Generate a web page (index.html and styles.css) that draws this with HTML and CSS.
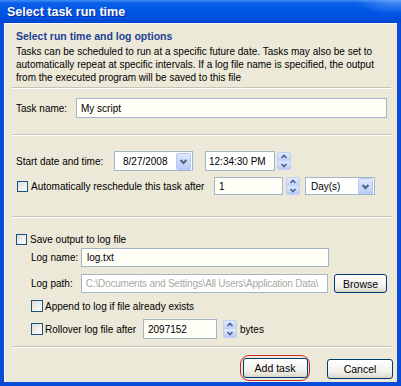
FILE: index.html
```html
<!DOCTYPE html>
<html lang="en">
<head>
  <meta charset="UTF-8" />
  <title>Select task run time</title>
  <link rel="stylesheet" href="styles.css">
</head>
<body>
  <div class="window">
    <div class="titlebar">Select task run time</div>

    <div class="client">
      <div class="heading">Select run time and log options</div>
      <p class="intro">
        Tasks can be scheduled to run at a specific future date. Tasks may also be set to<br>
        automatically repeat at specific intervals. If a log file name is specified, the output<br>
        from the executed program will be saved to this file
      </p>

      <div class="sep sep-top"></div>

      <div class="row row-name">
        <span class="label label-name">Task name:</span>
        <span class="field field-name">My script</span>
      </div>

      <div class="sep sep-mid"></div>

      <div class="row row-start">
        <span class="label label-start">Start date and time:</span>
        <span class="field combo combo-date">
          <span class="combo-text">8/27/2008</span>
          <span class="drop">
            <svg width="13" height="15" viewBox="0 0 13 15"><path d="M3.5 6 L6.5 9 L9.5 6" fill="none" stroke="#4d6185" stroke-width="2"/></svg>
          </span>
        </span>
        <span class="field field-time">12:34:30 PM</span>
        <span class="spin spin-time">
          <svg width="14" height="18" viewBox="0 0 14 18">
            <path d="M4.5 6 L7 3.5 L9.5 6" fill="none" stroke="#4d6185" stroke-width="1.6"/>
            <path d="M4.5 12 L7 14.5 L9.5 12" fill="none" stroke="#4d6185" stroke-width="1.6"/>
          </svg>
        </span>
      </div>

      <div class="row row-auto">
        <span class="check"></span>
        <span class="label label-auto">Automatically reschedule this task after</span>
        <span class="field field-count">1</span>
        <span class="spin spin-count">
          <svg width="14" height="18" viewBox="0 0 14 18">
            <path d="M4.5 6 L7 3.5 L9.5 6" fill="none" stroke="#4d6185" stroke-width="1.6"/>
            <path d="M4.5 12 L7 14.5 L9.5 12" fill="none" stroke="#4d6185" stroke-width="1.6"/>
          </svg>
        </span>
        <span class="field combo combo-unit">
          <span class="combo-text">Day(s)</span>
          <span class="drop">
            <svg width="13" height="15" viewBox="0 0 13 15"><path d="M3.5 6 L6.5 9 L9.5 6" fill="none" stroke="#4d6185" stroke-width="2"/></svg>
          </span>
        </span>
      </div>

      <div class="sep sep-log"></div>

      <div class="row row-save">
        <span class="check"></span>
        <span class="label label-save">Save output to log file</span>
      </div>

      <div class="row row-logname indent">
        <span class="label label-log">Log name:</span>
        <span class="field field-log">log.txt</span>
      </div>

      <div class="row row-logpath indent">
        <span class="label label-log">Log path:</span>
        <span class="field field-log disabled">C:\Documents and Settings\All Users\Application Data\</span>
        <span class="btn btn-browse">Browse</span>
      </div>

      <div class="row row-append indent">
        <span class="check check-big"></span>
        <span class="label label-check">Append to log if file already exists</span>
      </div>

      <div class="row row-roll indent">
        <span class="check check-big"></span>
        <span class="label label-roll">Rollover log file after</span>
        <span class="field field-size">2097152</span>
        <span class="spin spin-size">
          <svg width="14" height="18" viewBox="0 0 14 18">
            <path d="M4.5 6 L7 3.5 L9.5 6" fill="none" stroke="#4d6185" stroke-width="1.6"/>
            <path d="M4.5 12 L7 14.5 L9.5 12" fill="none" stroke="#4d6185" stroke-width="1.6"/>
          </svg>
        </span>
        <span class="label label-bytes">bytes</span>
      </div>

      <div class="sep sep-bottom"></div>

      <div class="row row-buttons">
        <span class="ring"><span class="btn btn-add">Add task</span></span>
        <span class="btn btn-cancel">Cancel</span>
      </div>
    </div>
  </div>
</body>
</html>
```

FILE: styles.css
```css
html, body {
  margin: 0;
  padding: 0;
  background: #ece9d8;
}

.window {
  width: 401px;
  height: 386px;
  display: flex;
  flex-direction: column;
  font-family: "Liberation Sans", Arial, sans-serif;
  font-size: 10px;
  color: #000;
  overflow: hidden;
}

/* blue XP caption */
.titlebar {
  height: 23px;
  line-height: 25px;
  padding-left: 7px;
  color: #fff;
  font-size: 12.5px;
  font-weight: bold;
  text-shadow: 1px 1px 0 #0a2a9a;
  background:
    radial-gradient(ellipse 40px 14px at 395px 0, rgba(120, 180, 255, 0.6), rgba(120, 180, 255, 0)),
    linear-gradient(to bottom, #3d8ff5 0, #0b5ee8 3px, #0058e6 45%, #004fdf 80%, #0043cc 100%);
}

.client {
  flex: 1;
  background: #ece9d8;
  border: 4px solid #0b4bd9;
  border-top: 0;
  padding: 7px 10px 0 12px;
  box-shadow: inset 1px 1px 0 #fbfaf3;
}

.heading {
  height: 12px;
  line-height: 12px;
  font-weight: bold;
  font-size: 10.5px;
  color: #1d3f94;
}

.intro {
  margin: 3px 0 0;
  line-height: 13px;
  white-space: nowrap;
}

.sep {
  height: 0;
  border-top: 1px solid #c7c4b4;
  border-bottom: 1px solid #fff;
  margin-left: -4px;
  margin-right: -4px;
}

.sep-top { margin-top: 3px; }
.sep-mid { margin-top: 16px; }
.sep-log { margin-top: 21px; }
.sep-bottom { margin-top: 7px; }

.row {
  display: flex;
  align-items: center;
  white-space: nowrap;
}

.indent { padding-left: 15px; }

.row-name { margin-top: 9px; height: 20px; }
.row-start { margin-top: 15px; height: 20px; }
.row-auto { margin-top: 6px; height: 18px; }
.row-save { margin-top: 14px; height: 15px; }
.row-logname { margin-top: 1px; height: 19px; }
.row-logpath { margin-top: 7px; height: 19px; }
.row-append { margin-top: 6px; height: 14px; }
.row-roll { margin-top: 6px; height: 20px; }
.row-buttons { margin-top: 7px; height: 26px; justify-content: flex-end; margin-right: -6px; }

.label-name { width: 60px; }
.label-start { width: 98px; }
.label-auto { width: 183px; margin-left: 3px; }
.label-save { margin-left: 3px; }
.label-log { width: 50px; }
.label-check { margin-left: 2px; }
.label-roll { width: 98px; margin-left: 2px; }
.label-bytes { margin-left: 3px; }

.field {
  box-sizing: border-box;
  height: 100%;
  display: flex;
  align-items: center;
  padding-left: 4px;
  background: #fffef7;
  border: 1px solid #a5b5c9;
  overflow: hidden;
}

.field-name { width: 311px; }
.field-time { width: 70px; margin-left: 12px; padding-left: 3px; background: #fff; }
.field-count { width: 69px; height: 18px; }
.field-log { width: 248px; padding-left: 5px; }
.field-size { width: 74px; }

.disabled {
  color: #a9a8a2;
  background: #fff;
  padding-left: 4px;
  letter-spacing: -0.2px;
}

.combo {
  justify-content: space-between;
  padding-right: 1px;
  background: #fff;
}

.combo-date { width: 79px; padding-left: 8px; }
.combo-unit { width: 70px; height: 18px; margin-left: 5px; padding-left: 5px; }

.drop {
  width: 13px;
  height: 15px;
  border: 1px solid #b6c9f5;
  border-radius: 2px;
  background: linear-gradient(to bottom, #dfe8fd, #b8cbf6);
  display: flex;
}

.spin {
  width: 14px;
  height: 18px;
  display: flex;
  border-radius: 2px;
  background:
    linear-gradient(to bottom, #e3ebfd, #bfd0f7 48%, #ece9d8 48%, #ece9d8 52%, #dfe8fd 52%, #b8cbf6);
  border: 1px solid #c0d0f3;
  box-sizing: border-box;
}

.spin svg { margin: -1px; }

.spin-time { margin-left: 2px; }
.spin-count { margin-left: 3px; }
.spin-size { margin-left: 6px; }

.check {
  box-sizing: border-box;
  width: 11px;
  height: 11px;
  border: 1px solid #1c5180;
  background: linear-gradient(135deg, #dcdcd5, #fff);
}

.row-auto .check { margin-left: 1px; }
.check-big { width: 12px; height: 12px; }

.btn {
  box-sizing: border-box;
  display: flex;
  align-items: center;
  justify-content: center;
  height: 20px;
  border: 1px solid #003c74;
  border-radius: 3px;
  background: linear-gradient(to bottom, #fff 0, #f3f2ed 60%, #e3e0d6 90%, #d6d0c4 100%);
  font-size: 10.5px;
}

.btn-browse { width: 53px; height: 19px; margin-left: 6px; }
.btn-add { width: 65px; }
.btn-cancel { width: 66px; margin-left: 17px; margin-top: 2px; }

/* red highlight around the default button */
.ring {
  box-sizing: border-box;
  height: 26px;
  padding: 1.5px;
  border: 1.5px solid #cc2a2a;
  border-radius: 9px;
  display: flex;
  align-items: center;
}
```
